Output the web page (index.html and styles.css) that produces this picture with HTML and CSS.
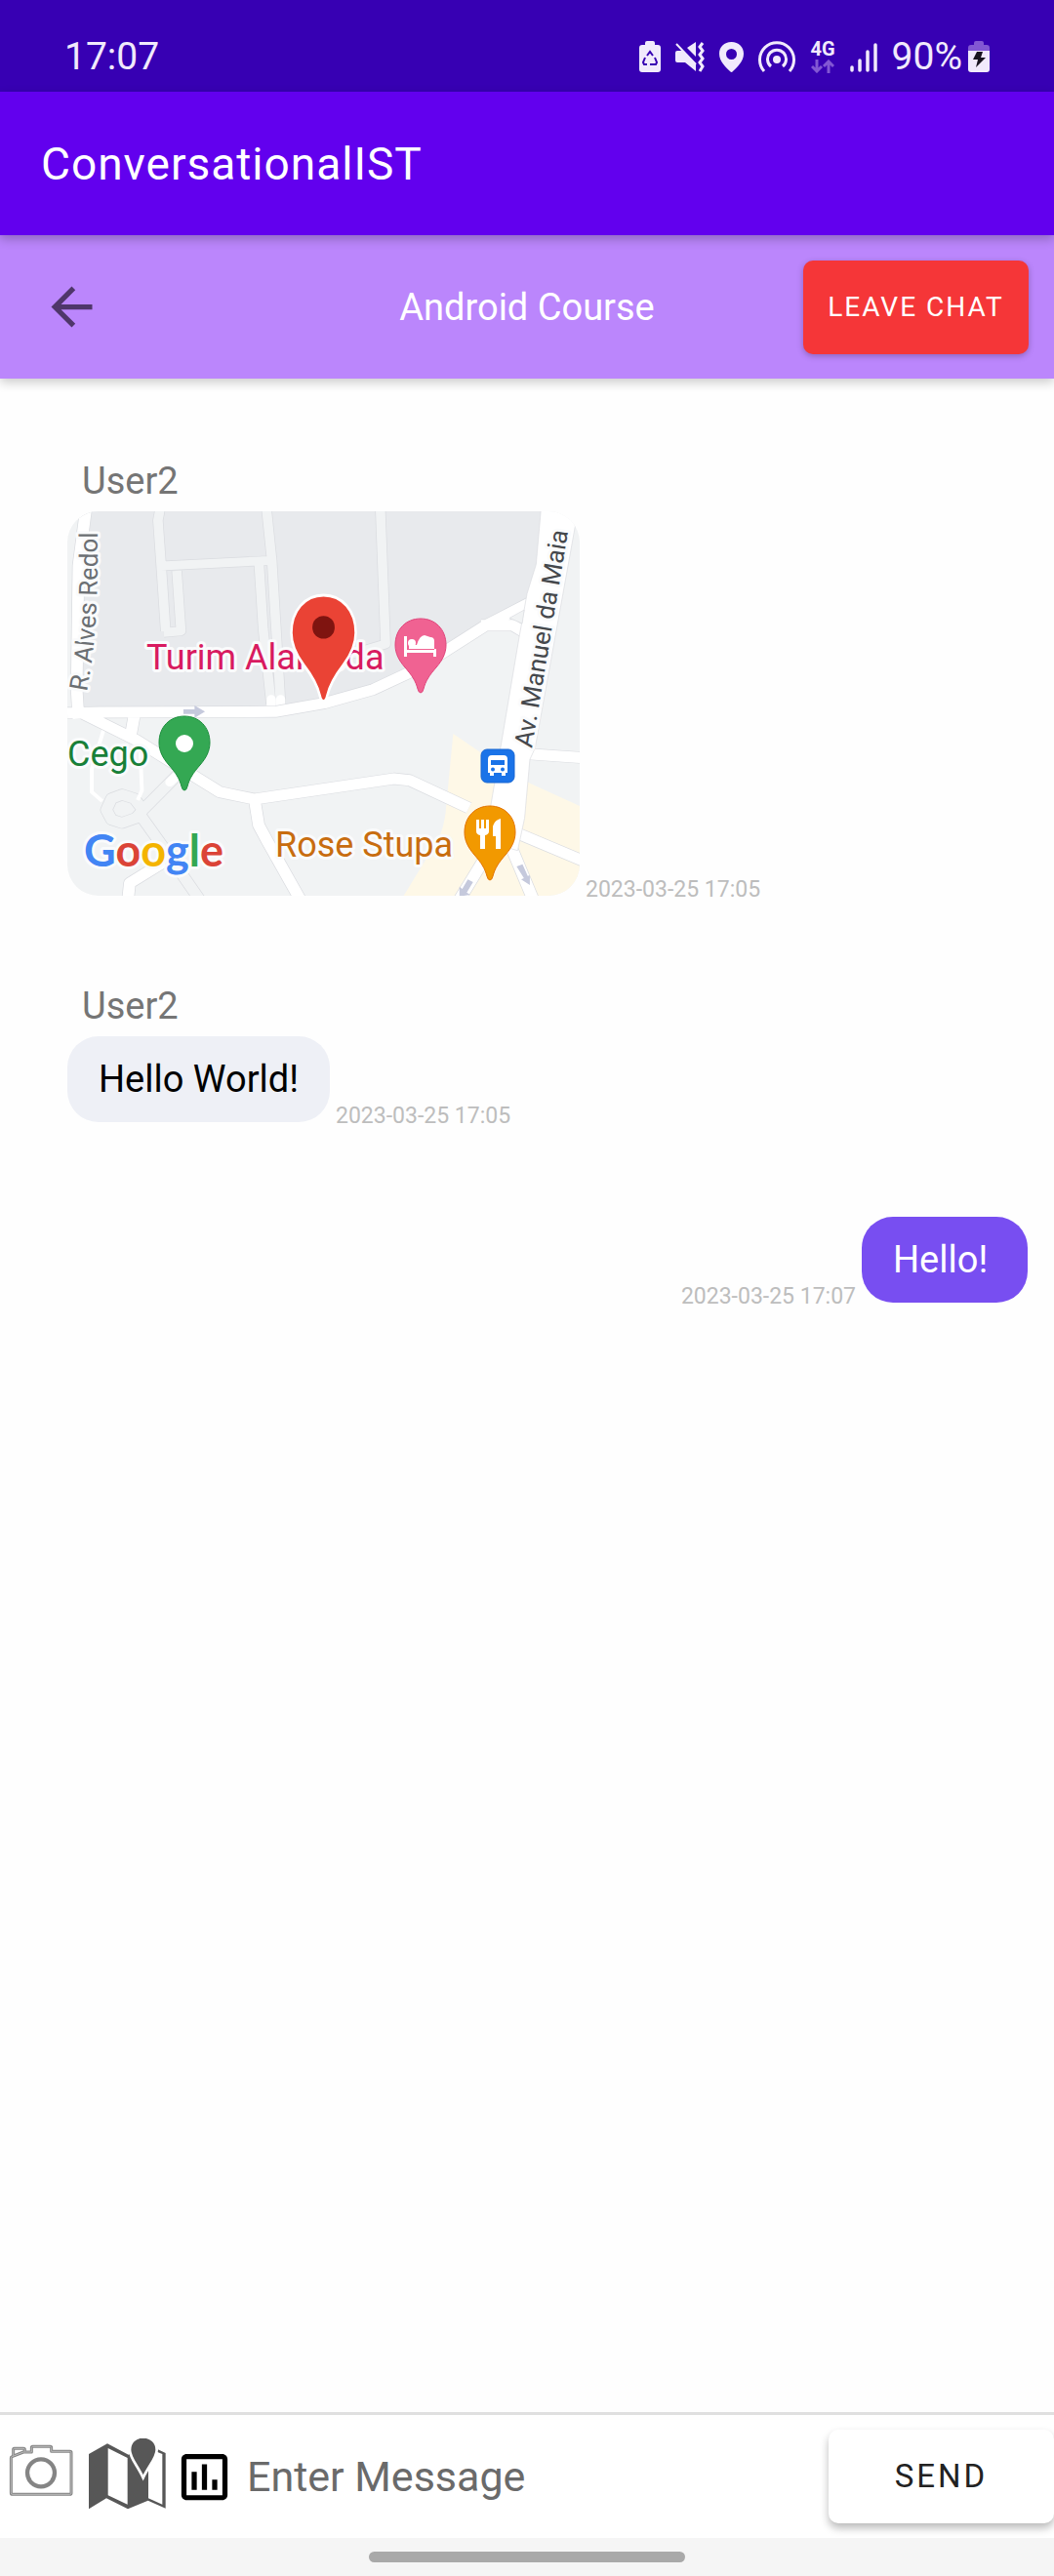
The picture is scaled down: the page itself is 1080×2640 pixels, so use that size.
FILE: index.html
```html
<!DOCTYPE html>
<html lang="en">
<head>
<meta charset="utf-8">
<meta name="viewport" content="width=device-width, initial-scale=1">
<title>ConversationalIST</title>
<link rel="stylesheet" href="styles.css">
</head>
<body>
<div class="status-bar">
  <span class="clock">17:07</span>
  <div class="status-icons">
    <svg width="22" height="34" viewBox="0 0 22 34" aria-hidden="true">
      <path fill="currentColor" d="M8 1h6q2 0 2 2v2h3q3 0 3 3v22q0 3-3 3H3q-3 0-3-3V8q0-3 3-3h3V3q0-2 2-2z"/>
      <path fill="none" stroke="#3700b3" stroke-width="2" d="M8 16l3-4 3 4M6 18l-2 5 1 2h3M16 18l2 5-1 2h-6"/>
    </svg>
    <svg width="30" height="34" viewBox="0 0 30 34" aria-hidden="true">
      <path fill="currentColor" d="M2 11h5l14 13v8L10 23H2q-2 0-2-2v-8q0-2 2-2zM12 8l9-6v15z"/>
      <path fill="none" stroke="currentColor" stroke-width="2" d="M1 4l20 21"/>
      <path fill="none" stroke="currentColor" stroke-width="3" d="M28 3l-3 4 3 4-3 4 3 4-3 4 3 4-3 5"/>
    </svg>
    <svg width="25" height="34" viewBox="0 0 25 34" aria-hidden="true">
      <path fill="currentColor" fill-rule="evenodd" d="M12.500 2C5 2 0 7 0 14c0 8 7 14 11 18q1.500 2 3 0c4-4 11-10 11-18 0-7-5-12-12.500-12zm0 7a5.500 5.500 0 110 11 5.500 5.500 0 010-11z"/>
    </svg>
    <svg width="38" height="34" viewBox="0 0 38 34" aria-hidden="true">
      <circle cx="19" cy="20" r="4" fill="currentColor"/>
      <path fill="none" stroke="currentColor" stroke-width="3" d="M13 27a9.500 9.500 0 1112 0M6 32a17.500 17.500 0 1126 0"/>
    </svg>
    <div class="network">
      <span>4G</span>
      <svg width="24" height="14" viewBox="0 0 24 14" aria-hidden="true"><path fill="none" stroke="#8257d3" stroke-width="3" d="M6 0v12M1 7l5 5 5-5M18 14V2M13 7l5-5 5 5"/></svg>
    </div>
    <svg width="28" height="34" viewBox="0 0 28 34" aria-hidden="true"><path fill="none" stroke="currentColor" stroke-width="3.500" stroke-linecap="round" d="M2 28v3M10 21v10M18 12v19M26 5v26"/></svg>
    <div class="battery">
      <span>90%</span>
      <svg width="22" height="34" viewBox="0 0 22 34" aria-hidden="true">
        <path fill="#8257d3" d="M8 1h6q2 0 2 2v2h3q3 0 3 3v3H0V8q0-3 3-3h3V3q0-2 2-2z"/>
        <path fill="currentColor" d="M0 11h22v19q0 3-3 3H3q-3 0-3-3z"/>
        <path fill="#18141f" d="M9 12h6l-2 6h5L8 28l2-8H5z"/>
      </svg>
    </div>
  </div>
</div>

<header class="app-bar"><h1>ConversationalIST</h1></header>

<nav class="chat-bar">
  <button class="back" type="button" aria-label="Back">
    <svg width="63" height="63" viewBox="0 0 24 24"><path fill="currentColor" d="M20 11H7.830l5.590-5.590L12 4l-8 8 8 8 1.410-1.410L7.830 13H20z"/></svg>
  </button>
  <h2>Android Course</h2>
  <button class="leave" type="button">LEAVE CHAT</button>
</nav>

<main class="messages">
  <article class="message">
    <p class="author">User2</p>
    <div class="line">
      <svg class="map" width="525" height="394" viewBox="0 0 525 394" role="img" aria-label="Map with a pin at Turim Alameda">
        <defs>
          <path id="pin" d="M26 0C11 0 0 11 0 27c0 9 4 16 10 23 7 8 11 14 13 22q1 4 3 4t3-4c2-8 6-14 13-22 6-7 10-14 10-23C52 11 41 0 26 0z"/>
          <path id="alves" d="M20 185C28 140 32 100 31 10"/>
          <path id="maia" d="M476 243L516 3"/>
        </defs>
        <rect width="525" height="394" fill="#f1f3f4"/>
        <g transform="scale(.35714 .33333) translate(-53 -222)" fill="none" stroke-linejoin="round">
          <path fill="#e8eaed" d="M90 222h1330v260l-160 90-200 135-135 61-135 44-140 26H90z"/>
          <path fill="#fef8e7" d="M1160 906l130 95 90 57 143 70v290H1010l80-140q45-60 50-150z"/>
          <path stroke="#dadce0" stroke-width="31" d="M320 210l-7 40 10 150 12 190M322 390l320-17M624 210l16 165 25 440M603 385l12 200 23 230M367 405l12 185-50 5M951 210l15 420-110 35"/>
          <path stroke="#f1f3f4" stroke-width="27" d="M320 210l-7 40 10 150 12 190M322 390l320-17M624 210l16 165 25 440M603 385l12 200 23 230M367 405l12 185-50 5M951 210l15 420-110 35"/>
          <path stroke="#dadce0" stroke-width="36" d="M265 1145l120-130M265 1160l60 90 110 170M180 1105l30-12 35 12 25 35-20 25-40 15-30-10-15-30z"/>
          <path stroke="#f1f3f4" stroke-width="32" d="M265 1145l120-130M265 1160l60 90 110 170M180 1105l30-12 35 12 25 35-20 25-40 15-30-10-15-30z"/>
          <path stroke="#fff" stroke-width="11" d="M158 890l-35 125v70l30 28M262 950l5 130-12 30"/>
          <path stroke="#fff" stroke-width="26" stroke-linecap="round" d="M638 800v20M665 800v20M347 1055l35-35"/>
          <path stroke="#dadce0" stroke-width="37" d="M107 210l-22 180-5 380 5 90M53 842l90-2 507-2 140-26 140-42 130-65 190-130 150-83M1240 572h90l40 25M90 840l160 85 240 160 100 22 400-63 45 5 170 85M590 1107l12 80 25 50 100 190M1340 1210l200 90M1375 968l160 12M1250 1290l-80 140M1325 1250l70 180M245 850l-10 60M330 1300l-98 65-5 50"/>
          <path stroke="#fff" stroke-width="33" d="M107 210l-22 180-5 380 5 90M53 842l90-2 507-2 140-26 140-42 130-65 190-130 150-83M1240 572h90l40 25M90 840l160 85 240 160 100 22 400-63 45 5 170 85M590 1107l12 80 25 50 100 190M1340 1210l200 90M1375 968l160 12M1250 1290l-80 140M1325 1250l70 180M245 850l-10 60M330 1300l-98 65-5 50"/>
          <path fill="#fff" stroke="#dadce0" stroke-width="2" d="M1412 215l-14 170-26 90-22 130-85 540-20 90 100 30 20-100 15-180 15-35 115-682v-53z"/>
          <path fill="#f1f3f4" stroke="#dadce0" stroke-width="2" d="M1322 550l42-25-6 42z"/>
          <path fill="#c5c9dc" d="M386 831h32v-12l30 19-30 19v-12h-32zM1342 1314l17-7 15 36 6-2v30l-25-17 8-4zM1202 1354l15 8-18 32 10 7-31 5v-30l8 7z"/>
        </g>
        <g class="map-text">
          <text class="street" fill="#6b6f73"><textPath href="#alves">R. Alves Redol</textPath></text>
          <text class="street" fill="#45484c"><textPath href="#maia">Av. Manuel da Maia</textPath></text>
          <text x="81" y="162" fill="#d81b60">Turim Alameda</text>
          <text x="0" y="261" fill="#188038">Cego</text>
          <text x="213" y="354" fill="#c86d10">Rose Stupa</text>
          <text class="logo" x="17" y="364"><tspan fill="#4285f4">G</tspan><tspan fill="#db4437">o</tspan><tspan fill="#f4b400">o</tspan><tspan fill="#4285f4">g</tspan><tspan fill="#34a853">l</tspan><tspan fill="#db4437">e</tspan></text>
        </g>
        <g transform="translate(336 110)">
          <use href="#pin" fill="#f06292" stroke="#e0457b"/>
          <path fill="#fff" d="M9 18h3v14h28v-9q0-4-4-4l-6-2q-5 0-8 10h-8v4h28v8h-3v-4H12v4H9z"/>
          <circle cx="17" cy="25" r="4" fill="#fff"/>
        </g>
        <g transform="translate(94 210)">
          <use href="#pin" fill="#34a853" stroke="#1e8e3e"/>
          <circle cx="26" cy="28" r="9" fill="#fff"/>
        </g>
        <g transform="translate(407 302)">
          <use href="#pin" fill="#f29900" stroke="#e37400"/>
          <path fill="#fff" d="M12 14h3v9h2v-9h3v9h2v-9h3v12q0 3-4 4v14h-5V30q-4-1-4-4zM37 13v31h-5V31h-3V21q2-7 8-8z"/>
        </g>
        <g transform="translate(424 244)">
          <rect width="34" height="34" rx="6" fill="#1a73e8" stroke="#1967d2"/>
          <path fill="#fff" fill-rule="evenodd" d="M11 6h12q4 0 4 4v14h-2v3h-4v-3h-8v3H9v-3H7V10q0-4 4-4zm-1 5v5h14v-5zm2 7.500a2 2 0 100 4 2 2 0 000-4zm10 0a2 2 0 100 4 2 2 0 000-4z"/>
        </g>
        <g transform="translate(229.500 86) scale(1.270 1.430)">
          <use href="#pin" fill="#ea4335" stroke="#fff" stroke-width="2"/>
          <ellipse cx="26" cy="23" rx="9" ry="8.200" fill="#7f1410"/>
        </g>
      </svg>
      <time class="stamp">2023-03-25 17:05</time>
    </div>
  </article>

  <article class="message">
    <p class="author">User2</p>
    <div class="line">
      <p class="bubble">Hello World!</p>
      <time class="stamp">2023-03-25 17:05</time>
    </div>
  </article>

  <article class="message own">
    <div class="line">
      <time class="stamp">2023-03-25 17:07</time>
      <p class="bubble">Hello!</p>
    </div>
  </article>
</main>

<form class="composer">
  <button class="tool" type="button" aria-label="Send photo">
    <svg width="70" height="78" viewBox="24 117 210 234" fill="none" stroke-linejoin="round">
      <g stroke="#858585" stroke-width="9"><path d="M41 170v-19q0-3 3-3h28q4 0 4 3v6M34 177q0-3 3-4l35-14h25v-13q0-4 4-4h53q4 0 4 4v11h57q4 0 4 4v124q0 4-4 4H39q-5 0-5-5z"/><circle cx="126" cy="223" r="42" stroke-width="13"/></g>
      <path stroke="#bbb" stroke-width="3" d="M41 170v-19q0-3 3-3h28q4 0 4 3v6M34 177q0-3 3-4l35-14h25v-13q0-4 4-4h53q4 0 4 4v11h57q4 0 4 4v124q0 4-4 4H39q-5 0-5-5z"/>
    </svg>
  </button>
  <button class="tool" type="button" aria-label="Send location">
    <svg width="84" height="78" viewBox="258 117 252 234">
      <path fill="#575757" fill-rule="evenodd" d="M273 165l57-32 65 34 62-30 52 25v170l-54-24-62 26-66-33-54 33zM332 147v145l60 28V177zM456 176v125l43 19V165l-30-12z"/>
      <path fill="#575757" stroke="#fff" stroke-width="8" d="M440 112c-24 0-41 17-41 40 0 25 23 47 41 86 18-39 42-61 42-86 0-23-18-40-42-40z"/>
    </svg>
  </button>
  <button class="tool" type="button" aria-label="Create poll">
    <svg width="63" height="63" viewBox="0 0 24 24"><path d="M9 17H7v-7h2zm4 0h-2V7h2zm4 0h-2v-4h2zM19 19.100H5V5h14zM19 3H5c-1.100 0-2 .9-2 2v14c0 1.100.9 2 2 2h14c1.100 0 2-.9 2-2V5c0-1.100-.9-2-2-2z" fill-rule="evenodd"/></svg>
  </button>
  <input class="entry" type="text" placeholder="Enter Message" aria-label="Message">
  <button class="send" type="submit">SEND</button>
</form>
<div class="gesture-bar"><span></span></div>
</body>
</html>
```
FILE: styles.css
```css
* { box-sizing: border-box; }

body {
  margin: 0;
  min-height: 100vh;
  display: flex;
  flex-direction: column;
  background: #fefefe;
  color: #000;
  font-family: Roboto, "Liberation Sans", sans-serif;
  font-size: 38px;
  line-height: 44px;
}

h1, h2, p { margin: 0; font-weight: 400; }
svg { display: block; flex: none; }
button, input { font: inherit; border: 0; margin: 0; padding: 0; background: none; }

.status-bar {
  height: 94px;
  padding: 22px 66px 0;
  display: flex;
  align-items: center;
  justify-content: space-between;
  background: #3700b3;
  color: #f1eafc;
  font-size: 39px;
}
.status-icons { display: flex; align-items: center; gap: 15px; }
.network { display: flex; flex-direction: column; align-items: center; gap: 2px; font-size: 20px; font-weight: 700; line-height: 17px; }
.battery { display: flex; align-items: center; gap: 6px; }

.app-bar {
  height: 147px;
  padding: 0 42px;
  display: flex;
  align-items: center;
  background: #6200ee;
  color: #fff;
  box-shadow: 0 4px 10px rgba(0, 0, 0, .24);
  z-index: 1;
}
.app-bar h1 { font-size: 46px; letter-spacing: 1px; }

.chat-bar {
  height: 147px;
  padding: 0 26px 0 42px;
  display: grid;
  grid-template-columns: 215px 1fr 231px;
  align-items: center;
  background: #bb86fc;
  box-shadow: 0 4px 10px rgba(0, 0, 0, .2);
}
.back { justify-self: start; color: #4f366a; }
.chat-bar h2 { font-size: 38px; color: #fff; text-align: center; }
.leave {
  height: 96px;
  border-radius: 10px;
  background: #f53638;
  color: #fff;
  font-size: 28px;
  letter-spacing: 2px;
  box-shadow: 0 2px 6px rgba(0, 0, 0, .25);
}

.messages {
  flex: 1;
  padding: 83px 27px 40px 69px;
  display: flex;
  flex-direction: column;
  gap: 83px;
}
.message { display: flex; flex-direction: column; gap: 9px; }
.author { padding-left: 15px; color: #757575; }
.line { display: flex; align-items: flex-end; gap: 6px; }
.own { padding-top: 6px; }
.own .line { justify-content: flex-end; }
.bubble {
  min-width: 170px;
  margin-bottom: 8px;
  padding: 22px 32px;
  border-radius: 32px;
  background: #eef0f6;
}
.own .bubble { background: #784ef1; color: #fff; }
.stamp { color: #bdbdbd; font-size: 23px; line-height: 28px; }

.map { margin-bottom: 8px; border-radius: 32px; }
.map-text { font-size: 36px; paint-order: stroke; stroke: #fafbfc; stroke-width: 6px; stroke-linejoin: round; }
.street { font-size: 26px; }
.logo { font-family: Lato, sans-serif; font-size: 45px; font-weight: 700; }

.composer {
  height: 129px;
  padding-left: 8px;
  display: flex;
  align-items: center;
  gap: 8px;
  border-top: 3px solid #e0e0e0;
  background: #fff;
}
.entry { flex: 1; min-width: 0; height: 64px; padding-left: 4px; font-size: 43px; line-height: 64px; }
.entry::placeholder { color: #6a6a6a; opacity: 1; }
.send {
  width: 231px;
  height: 96px;
  border-radius: 10px;
  background: #fff;
  color: #222;
  font-size: 33px;
  letter-spacing: 3px;
  box-shadow: 0 5px 8px rgba(0, 0, 0, .27);
}

.gesture-bar {
  height: 39px;
  display: flex;
  align-items: center;
  justify-content: center;
  background: #f5f5f5;
  z-index: 1;
}
.gesture-bar span { width: 30%; height: 11px; border-radius: 6px; background: #a9a9a9; }
```
